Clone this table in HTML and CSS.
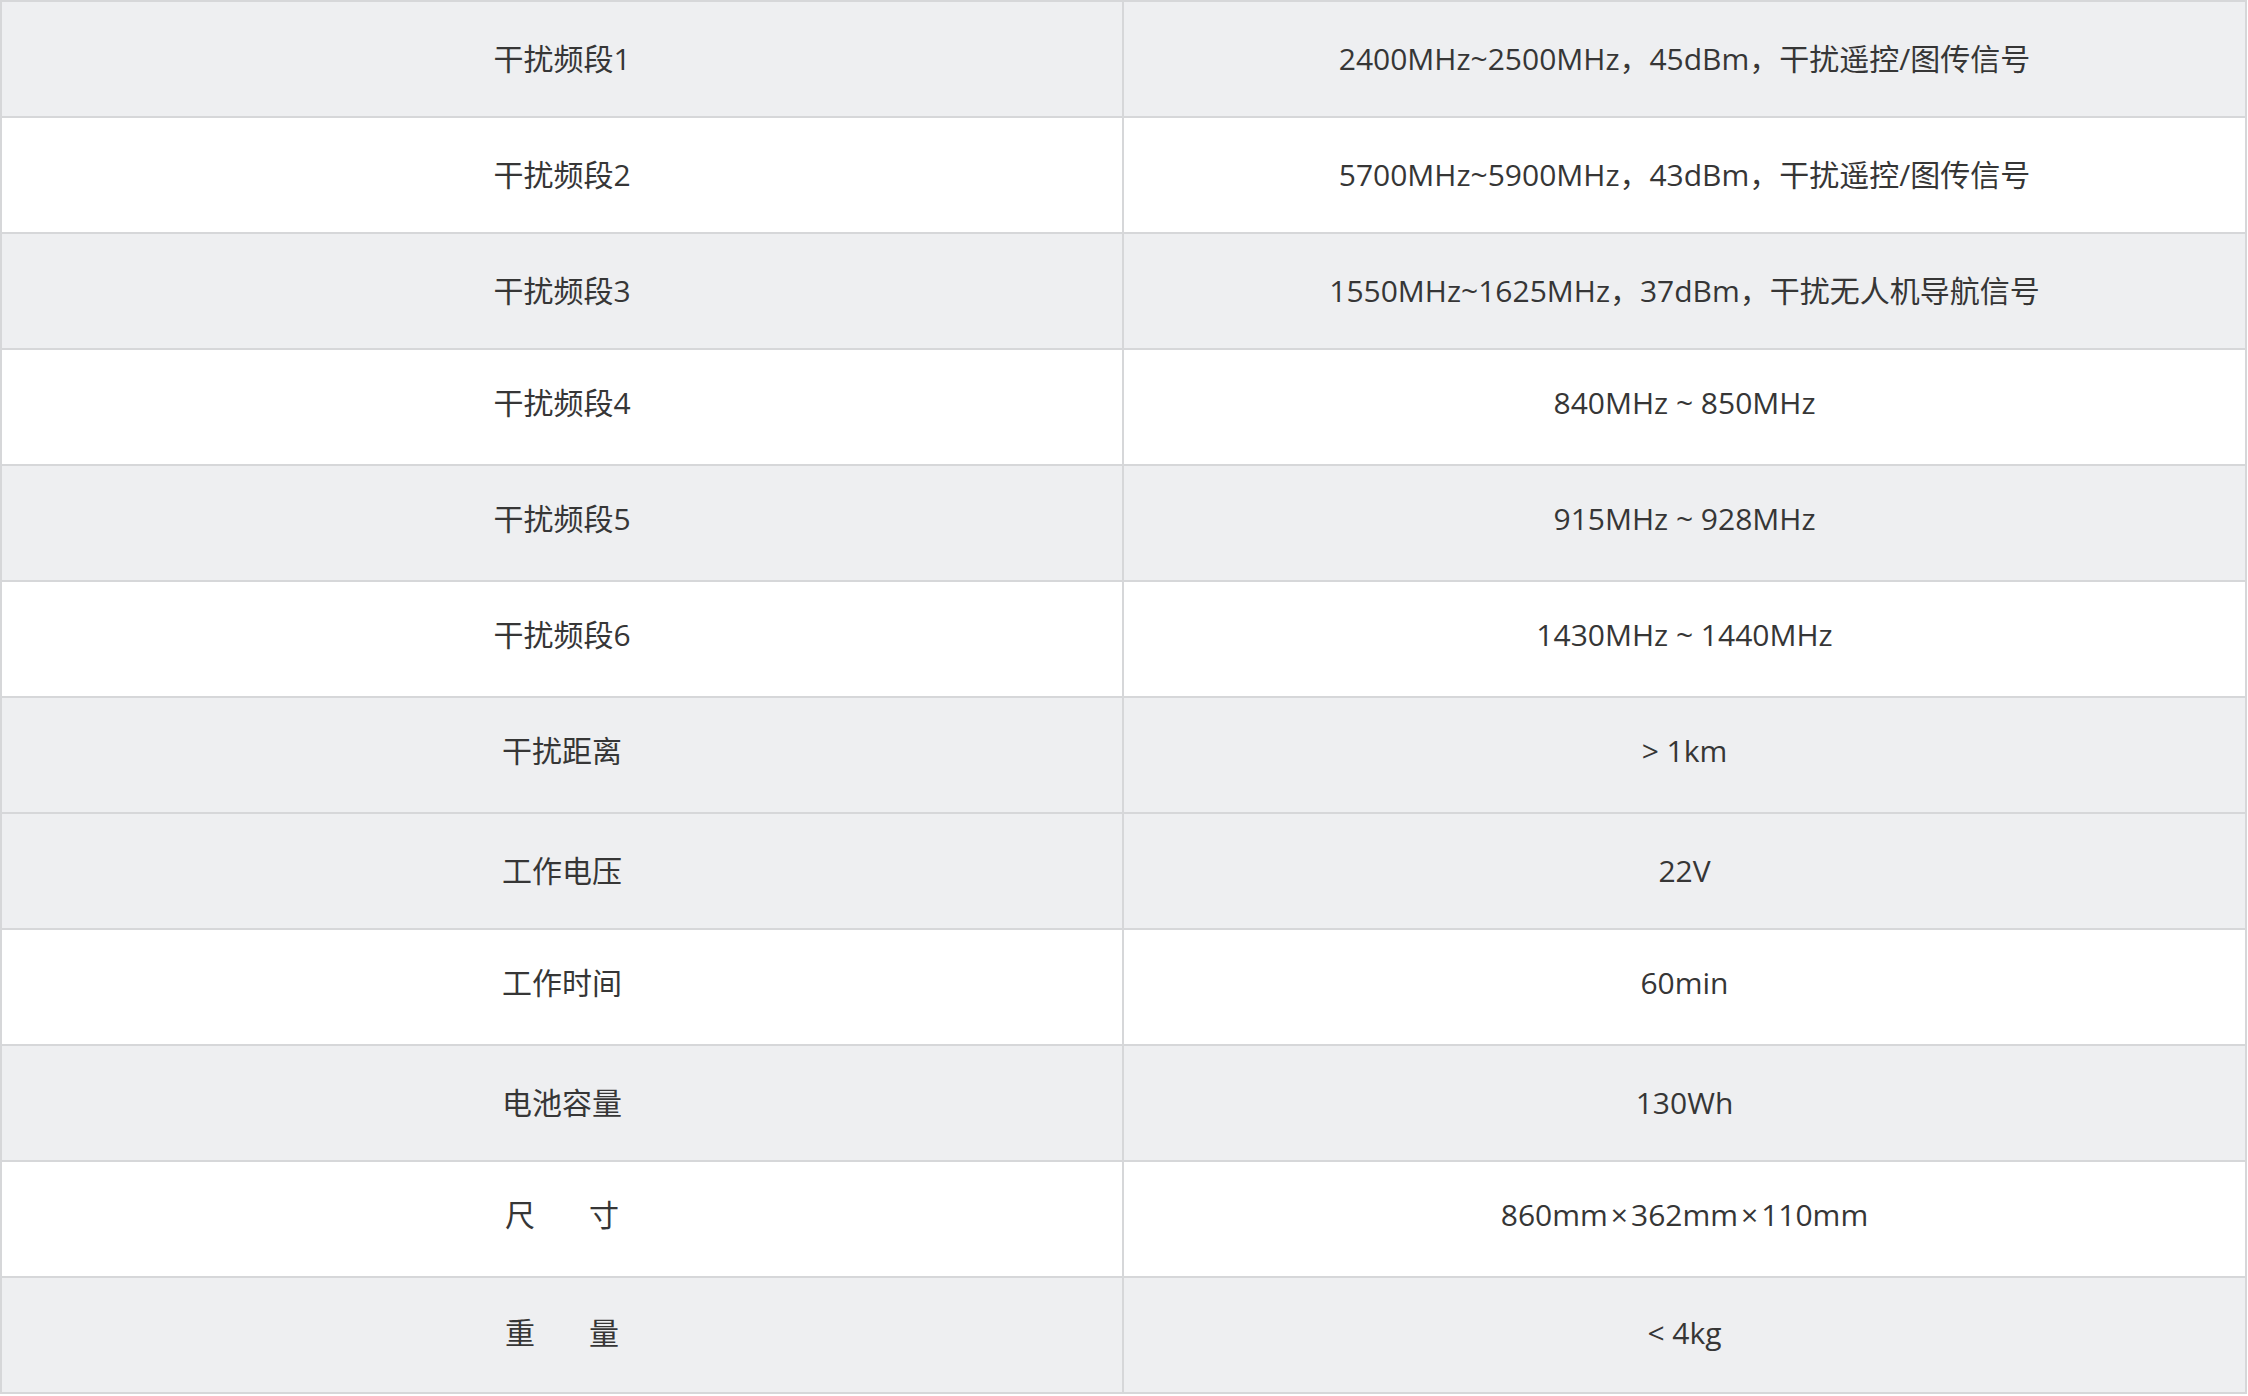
FILE: index.html
```html
<!DOCTYPE html>
<html lang="zh-CN">
<head>
<meta charset="utf-8">
<title>参数</title>
<link rel="stylesheet" href="styles.css">
</head>
<body>
<table class="spec">
  <colgroup><col class="col-a"><col class="col-b"></colgroup>
  <tbody>
    <tr class="odd"><td>干扰频段1</td><td>2400MHz~2500MHz，45dBm，干扰遥控/图传信号</td></tr>
    <tr><td>干扰频段2</td><td>5700MHz~5900MHz，43dBm，干扰遥控/图传信号</td></tr>
    <tr class="odd"><td>干扰频段3</td><td>1550MHz~1625MHz，37dBm，干扰无人机导航信号</td></tr>
    <tr class="up"><td>干扰频段4</td><td>840MHz ~ 850MHz</td></tr>
    <tr class="odd up"><td>干扰频段5</td><td>915MHz ~ 928MHz</td></tr>
    <tr class="up"><td>干扰频段6</td><td>1430MHz ~ 1440MHz</td></tr>
    <tr class="odd up"><td>干扰距离</td><td>&gt; 1km</td></tr>
    <tr class="odd"><td>工作电压</td><td>22V</td></tr>
    <tr class="up"><td>工作时间</td><td>60min</td></tr>
    <tr class="odd"><td>电池容量</td><td>130Wh</td></tr>
    <tr class="up"><td>尺<span class="gap"> </span>寸</td><td>860mm<span class="times">×</span>362mm<span class="times">×</span>110mm</td></tr>
    <tr class="odd up-s"><td>重<span class="gap"> </span>量</td><td>&lt; 4kg</td></tr>
  </tbody>
</table>
</body>
</html>
```

FILE: styles.css
```css
html, body {
  margin: 0;
  padding: 0;
  background: #ffffff;
}

.spec {
  width: 2247px;
  table-layout: fixed;
  border-collapse: separate;
  border-spacing: 0;
  border-top: 2px solid #d6d7d9;
  border-left: 2px solid #d6d7d9;
  font-family: "Open Sans", "Noto Sans CJK SC", sans-serif;
  font-size: 30px;
  color: #363636;
}

.col-a { width: 1122px; }
.col-b { width: 1123px; }

.spec td {
  height: 114px;
  padding: 0;
  text-align: center;
  vertical-align: middle;
  border-right: 2px solid #d6d7d9;
  border-bottom: 2px solid #d6d7d9;
  line-height: 40px;
  white-space: nowrap;
}

.spec tr.odd td {
  background: #eeeff1;
}

.spec tr.up td {
  padding-bottom: 8px;
  height: 106px;
}

.spec tr.up-s td {
  padding-bottom: 4px;
  height: 110px;
}

.gap {
  display: inline-block;
  width: 54px;
}

.times {
  margin: 0 3px;
}
```
